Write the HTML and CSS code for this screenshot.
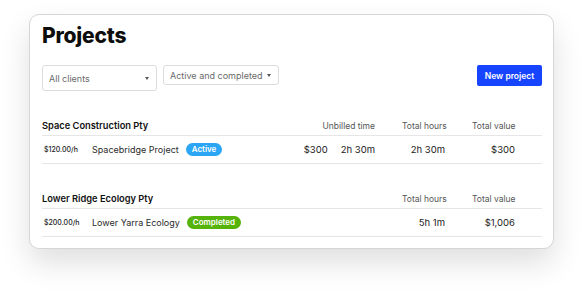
FILE: index.html
```html
<!DOCTYPE html>
<html>
<head>
<meta charset="utf-8">
<link rel="stylesheet" href="styles.css">
</head>
<body>
<div class="card">
  <h1 class="title">Projects</h1>
  <div class="toolbar">
    <div class="select select-tall"><span>All clients</span><span class="caret"></span></div>
    <div class="select"><span>Active and completed</span><span class="caret"></span></div>
    <div class="spacer"></div>
    <button class="btn">New project</button>
  </div>

  <div class="section">
    <div class="row head">
      <div class="client">Space Construction Pty</div>
      <div class="num label">Unbilled time</div>
      <div class="num label">Total hours</div>
      <div class="num label">Total value</div>
    </div>
    <div class="row item">
      <div class="rate">$120.00/h</div>
      <div class="name">Spacebridge Project <span class="badge badge-active">Active</span></div>
      <div class="num unbilled"><span>$300</span><span>2h 30m</span></div>
      <div class="num">2h 30m</div>
      <div class="num">$300</div>
    </div>
  </div>

  <div class="section">
    <div class="row head">
      <div class="client">Lower Ridge Ecology Pty</div>
      <div class="num label"></div>
      <div class="num label">Total hours</div>
      <div class="num label">Total value</div>
    </div>
    <div class="row item">
      <div class="rate">$200.00/h</div>
      <div class="name">Lower Yarra Ecology <span class="badge badge-done">Completed</span></div>
      <div class="num unbilled"></div>
      <div class="num">5h 1m</div>
      <div class="num">$1,006</div>
    </div>
  </div>
</div>
</body>
</html>
```

FILE: styles.css
```css
* { box-sizing: border-box; }
html, body { margin: 0; padding: 0; background: #fff; }
body {
  font-family: Inter, "Noto Sans", sans-serif;
  color: #1b1b1b;
  padding: 14px 30px 0 29px;
  min-height: 293px;
}
.card {
  width: 525px;
  height: 235px;
  border: 1px solid #d6d6d6;
  border-radius: 10px;
  background: #fff;
  box-shadow: 0 14px 30px rgba(0,0,0,0.13);
  padding: 8px 11px 0 12px;
}
.title {
  margin: 0;
  font-size: 21px;
  font-weight: 800;
  letter-spacing: -0.2px;
  line-height: 26px;
  color: #0d0d0d;
}
.toolbar {
  display: flex;
  align-items: flex-start;
  gap: 6px;
  margin-top: 16px;
}
.select {
  display: flex;
  align-items: center;
  justify-content: space-between;
  height: 20px;
  width: 116px;
  border: 1px solid #dcdcdc;
  border-radius: 3px;
  padding: 0 7px 0 6px;
  font-size: 9px;
  color: #6b6b6b;
  white-space: nowrap;
}
.select-tall { height: 26px; width: 115px; }
.caret {
  width: 0; height: 0;
  border-left: 2.5px solid transparent;
  border-right: 2.5px solid transparent;
  border-top: 3px solid #555;
}
.spacer { flex: 1; }
.btn {
  height: 21px;
  width: 65px;
  border: none;
  border-radius: 2px;
  background: #1745ff;
  color: #fff;
  font-family: inherit;
  font-size: 8.5px;
  font-weight: 600;
  padding: 0;
}
.section { margin-top: 25px; }
.row {
  display: grid;
  grid-template-columns: 50px 1fr 100px 70px 70px;
  align-items: center;
  border-bottom: 1px solid #e6e6e6;
  white-space: nowrap;
}
.head { height: 20px; }
.item { height: 28px; }
.client {
  grid-column: 1 / 3;
  font-size: 9.3px;
  font-weight: 600;
  color: #111;
}
.num {
  text-align: right;
  padding-right: 27px;
  font-size: 9.5px;
  color: #1b1b1b;
}
.label { font-size: 8.5px; color: #555; }
.unbilled { display: flex; justify-content: flex-end; gap: 13px; }
.rate {
  padding-left: 2px;
  font-size: 7px;
  font-weight: 500;
  color: #222;
}
.name {
  font-size: 9px;
  color: #2a2a2a;
  display: flex;
  align-items: center;
  gap: 7px;
}
.badge {
  display: inline-block;
  height: 13px;
  line-height: 13px;
  border-radius: 7px;
  padding: 0 6px;
  font-size: 8px;
  font-weight: 600;
  color: #fff;
}
.badge-active { background: #2aa6f5; }
.badge-done { background: #56b30a; }
```
